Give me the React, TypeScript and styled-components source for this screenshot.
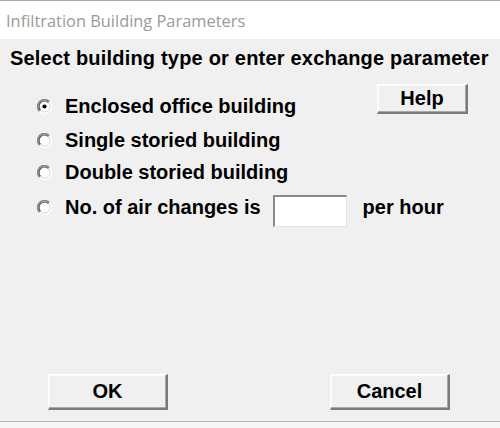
import React from "react";
import styled, { createGlobalStyle } from "styled-components";

const GlobalStyle = createGlobalStyle`
  html, body { margin: 0; padding: 0; background: #f7f7f7; }
  * { box-sizing: border-box; }
`;

const Window = styled.div`
  width: 500px;
  height: 428px;
  display: flex;
  flex-direction: column;
  background: #f7f7f7;
  overflow: hidden;
`;

const TitleBar = styled.div`
  height: 39px;
  border-top: 1px solid #a8a8a8;
  background: #ffffff;
  display: flex;
  align-items: center;
  padding-left: 6px;
  font-family: "Open Sans", "Noto Sans", sans-serif;
  font-size: 16.4px;
  color: #9a9a9a;
`;

const Body = styled.div`
  height: 383px;
  background: #f0f0f0;
  display: flex;
  flex-direction: column;
  padding: 8px 0 11px 0;
  font-family: "Liberation Sans", Arial, sans-serif;
  font-weight: bold;
  font-size: 20px;
  color: #000;
  border-bottom: 1px solid #b4b4b4;
`;

const Heading = styled.div`
  line-height: 23px;
  padding-left: 10px;
  white-space: nowrap;
  letter-spacing: 0.2px;
`;

const Main = styled.div`
  margin-top: 14px;
  display: grid;
  grid-template-columns: 1fr;
  grid-template-areas: "main";
`;

const Options = styled.div`
  grid-area: main;
  padding-left: 37px;
  padding-top: 5.5px;
  display: flex;
  flex-direction: column;
`;

const Row = styled.div<{ $h: number }>`
  height: ${(p) => p.$h}px;
  display: flex;
  align-items: center;
  white-space: nowrap;
`;

const InputRow = styled.div`
  display: flex;
  align-items: flex-start;
  padding-top: 6.5px;
  white-space: nowrap;
`;

const Choice = styled.label<{ $mt?: number }>`
  display: flex;
  align-items: center;
  gap: 13px;
  line-height: 23px;
  margin-top: ${(p) => p.$mt ?? 0}px;
`;

const Field = styled.div`
  width: 74px;
  height: 32px;
  margin-left: 12px;
  background: #ffffff;
  border-style: solid;
  border-width: 2px 1px 1px 2px;
  border-color: #8a8a8a #e2e2e2 #e2e2e2 #8a8a8a;
`;

const Suffix = styled.span`
  line-height: 23px;
  margin-left: 16px;
  margin-top: 1px;
`;

const Button = styled.button<{ $w: number; $h: number }>`
  width: ${(p) => p.$w}px;
  height: ${(p) => p.$h}px;
  padding: 0;
  background: #f0f0f0;
  font-family: "Liberation Sans", Arial, sans-serif;
  font-weight: bold;
  font-size: 20px;
  color: #000;
  border-style: solid;
  border-width: 1px 2px 2px 1px;
  border-color: #ffffff #7a7a7a #7a7a7a #ffffff;
  box-shadow: inset -1px -1px 0 #a8a8a8, inset 1px 1px 0 #fbfbfb;
  display: flex;
  align-items: center;
  justify-content: center;
  line-height: 23px;
`;

const HelpWrap = styled.div`
  grid-area: main;
  justify-self: end;
  align-self: start;
  margin-right: 32px;
`;

const Footer = styled.div`
  margin-top: auto;
  display: flex;
  justify-content: space-between;
  padding: 0 50px 0 48px;
`;

const RadioIcon: React.FC<{ checked?: boolean }> = ({ checked }) => (
  <svg width="15" height="15" viewBox="0 0 15 15" style={{ flex: "none" }}>
    <circle cx="7.5" cy="7.5" r="5.6" fill="#ffffff" />
    <path d="M 2.6 12.4 A 6.9 6.9 0 0 1 12.4 2.6" fill="none" stroke="#8a8a8a" strokeWidth="1.6" />
    <path d="M 3.6 11.4 A 5.5 5.5 0 0 1 11.4 3.6" fill="none" stroke="#505050" strokeWidth="1.2" />
    <path d="M 12.4 2.6 A 6.9 6.9 0 0 1 2.6 12.4" fill="none" stroke="#ffffff" strokeWidth="1.5" />
    <path d="M 11.4 3.6 A 5.5 5.5 0 0 1 3.6 11.4" fill="none" stroke="#d8d8d8" strokeWidth="1" />
    {checked && <circle cx="7.5" cy="7.5" r="2.1" fill="#000" />}
  </svg>
);

export default function App() {
  return (
    <>
      <GlobalStyle />
      <Window>
        <TitleBar>Infiltration Building Parameters</TitleBar>
        <Body>
          <Heading>Select building type or enter exchange parameter</Heading>
          <Main>
            <Options>
              <Row $h={34}>
                <Choice>
                  <RadioIcon checked />
                  Enclosed office building
                </Choice>
              </Row>
              <Row $h={33}>
                <Choice>
                  <RadioIcon />
                  Single storied building
                </Choice>
              </Row>
              <Row $h={32}>
                <Choice>
                  <RadioIcon />
                  Double storied building
                </Choice>
              </Row>
              <InputRow>
                <Choice $mt={1}>
                  <RadioIcon />
                  No. of air changes is
                </Choice>
                <Field />
                <Suffix>per hour</Suffix>
              </InputRow>
            </Options>
            <HelpWrap>
              <Button $w={91} $h={30}>Help</Button>
            </HelpWrap>
          </Main>
          <Footer>
            <Button $w={120} $h={36}>OK</Button>
            <Button $w={120} $h={36}>Cancel</Button>
          </Footer>
        </Body>
      </Window>
    </>
  );
}
